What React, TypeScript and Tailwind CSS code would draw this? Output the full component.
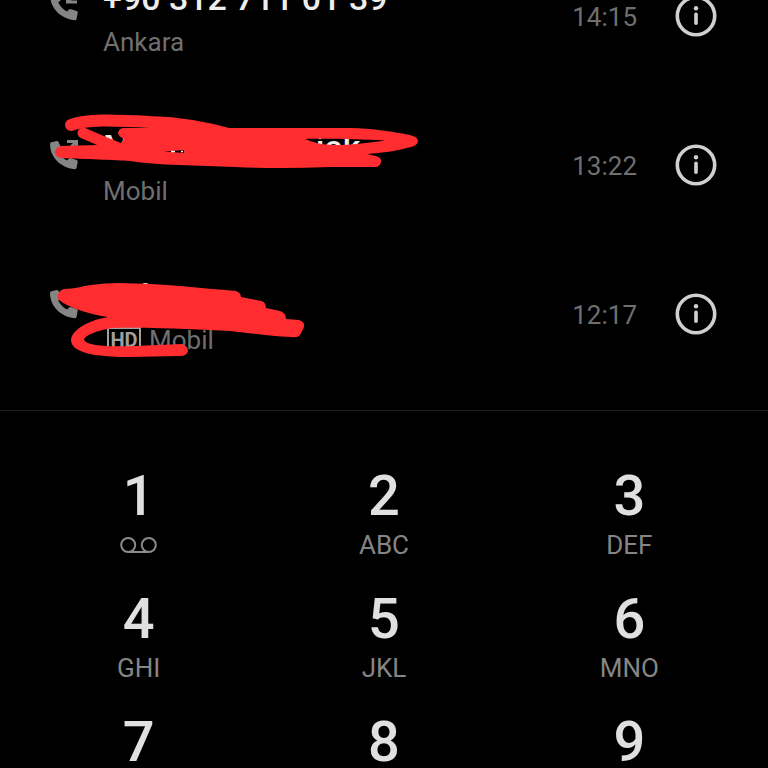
import { ReactNode } from 'react';

type Call = {
  id: number;
  direction: 'in' | 'out';
  title: ReactNode;
  detail: string;
  hd?: boolean;
  time: string;
  scribble?: ReactNode;
};

function CallIcon({ direction }: { direction: 'in' | 'out' }) {
  return (
    <svg viewBox="0 0 28 31" className="mt-12 h-[31px] w-7 shrink-0 self-start text-[#858585]" aria-hidden="true">
      <path
        fill="currentColor"
        d="M0 5Q0 3.600 1.400 3.300L6.600 2Q8 1.700 8.500 3L11 8.600Q11.400 9.800 10.400 10.600L8.200 12.400Q11 18 17 21.600L19 19.600Q20 18.800 21.200 19.200L26.600 20.900Q28 21.400 27.700 22.800L26.500 28.900Q26.200 30.400 24.600 30.200C10.500 28.600 0.200 18.500 0 5Z"
      />
      <path
        fill="none"
        stroke="currentColor"
        strokeWidth="3"
        d={direction === 'out' ? 'M17 2.500H26.500V12M26.500 2.500L17 12' : 'M17.500 2.500V12H27M17.500 12L27 2.500'}
      />
    </svg>
  );
}

function InfoIcon() {
  return (
    <svg viewBox="0 0 42 42" className="size-[42px]" fill="none" aria-hidden="true">
      <circle cx="21" cy="21" r="18.700" stroke="#d0d0d0" strokeWidth="3.600" />
      <circle cx="21" cy="13.300" r="2.200" fill="#d0d0d0" />
      <path d="M21 19.300V28.300" stroke="#d0d0d0" strokeWidth="3.600" strokeLinecap="round" />
    </svg>
  );
}

function Voicemail() {
  return (
    <svg viewBox="0 0 37 18" className="h-[18px] w-[37px]" fill="none" stroke="#8a8a8a" strokeWidth="2" aria-hidden="true">
      <circle cx="8.200" cy="9" r="7" />
      <circle cx="28.800" cy="9" r="7" />
      <path d="M8 16H29" />
    </svg>
  );
}

function WideScribble() {
  return (
    <svg viewBox="0 0 440 149" className="absolute left-0 top-0 h-[149px] w-[440px]" aria-hidden="true">
      <path d="M71 34C85 28 115 29 150 31C180 32 205 36 232 44" fill="none" stroke="#ff2d30" strokeWidth="12" strokeLinecap="round" />
      <path d="M83 42L118 57" fill="none" stroke="#ff2d30" strokeWidth="11" strokeLinecap="round" />
      <path
        fill="#ff2d30"
        fillRule="evenodd"
        d="M124 37H350C372 37 395 41 410 44Q418 46 418 50Q418 54 411 56C396 60 382 62 367 63L376 65Q382 67 381 71Q380 76 375 76L330 76Q280 78 235 76L180 74Q150 73 130 70C115 69 85 68 61 67Q55 66 55 61Q56 56 61 55L98 54L104 46L121 52L124 48Q118 45 118 42Q119 37 124 37Z M305 48C312 51 322 54 335 54C350 54 368 52 385 49.500C360 48 325 47.500 305 48Z"
      />
      <path d="M164 60.500L184 59V62Z" fill="#140405" />
      <path d="M171 60.500H175M181 60.500H183" stroke="#f2f2f2" strokeWidth="1.500" />
    </svg>
  );
}

function ShortScribble() {
  return (
    <svg viewBox="0 0 320 149" className="absolute left-0 top-0 h-[149px] w-80" aria-hidden="true">
      <path
        fill="#ff2d30"
        d="M58 59Q56 52 64 49C75 49 82 46 91 45Q110 42 135 43.500C165 44 200 48 236 51Q241 53 241 57L261 61Q266 62 266 68L280 71Q286 73 286 79L299 80Q305 82 304 87L300 95Q298 98 291 97C270 96 250 93 230 91C200 90 160 87 112 88C100 90 84 95 84 100C87 106 110 107 135 106L182 104Q188 106 188 111Q187 116 180 116L130 117C105 117 71 115 71 100C72 89 90 80 108 77C92 75 66 67 58 59Z"
      />
    </svg>
  );
}

const calls: Call[] = [
  { id: 1, direction: 'in', title: '+90 312 711 01 39', detail: 'Ankara', time: '14:15' },
  {
    id: 2,
    direction: 'out',
    title: (
      <span className="flex gap-[183px]">
        <span>M</span>
        <span>iak</span>
      </span>
    ),
    detail: 'Mobil',
    time: '13:22',
    scribble: <WideScribble />,
  },
  {
    id: 3,
    direction: 'out',
    title: <span className="pl-[38px]">l</span>,
    detail: 'Mobil',
    hd: true,
    time: '12:17',
    scribble: <ShortScribble />,
  },
];

const keys = [
  { digit: '1', letters: '' },
  { digit: '2', letters: 'ABC' },
  { digit: '3', letters: 'DEF' },
  { digit: '4', letters: 'GHI' },
  { digit: '5', letters: 'JKL' },
  { digit: '6', letters: 'MNO' },
  { digit: '7' },
  { digit: '8' },
  { digit: '9' },
];

function CallRow({ call }: { call: Call }) {
  return (
    <li className="relative flex h-[149px] items-center pl-[50px] pr-[51px]">
      <CallIcon direction={call.direction} />
      <div className="ml-[25px] flex flex-1 flex-col gap-2 pt-0.5">
        <div className="text-[34px] font-medium leading-10 text-[#ededed]">{call.title}</div>
        <div className="flex items-center gap-2 text-[26px] leading-8 text-[#6f6f6f]">
          {call.hd && (
            <span className="ml-1 flex h-[26px] w-[34px] items-center justify-center border-2 border-[#a0a0a0] text-xl font-bold leading-none text-[#a0a0a0]">
              HD
            </span>
          )}
          <span>{call.detail}</span>
        </div>
      </div>
      <time className="text-[26px] leading-8 text-[#6f6f6f]">{call.time}</time>
      <button type="button" aria-label="Info" className="mb-0.5 ml-[38px]">
        <InfoIcon />
      </button>
      {call.scribble}
    </li>
  );
}

export default function App() {
  return (
    <main className="h-screen overflow-hidden bg-black font-['Roboto',sans-serif]">
      {/* list is scrolled, first row is partly out of view */}
      <ul className="-mt-[58px] pb-[21px]">
        {calls.map((call) => (
          <CallRow key={call.id} call={call} />
        ))}
      </ul>

      <div className="grid grid-cols-3 gap-y-[30px] border-t border-[#1f1f1f] px-4 pt-[57px]">
        {keys.map((key) => (
          <button key={key.digit} type="button" className="flex flex-col items-center gap-[5px]">
            <span className="text-[56px] font-medium leading-[56px] text-[#e0e0e0]">{key.digit}</span>
            {key.letters !== undefined && (
              <span className="flex h-8 items-center text-[26px] leading-8 text-[#858585]">
                {key.letters || <Voicemail />}
              </span>
            )}
          </button>
        ))}
      </div>
    </main>
  );
}
